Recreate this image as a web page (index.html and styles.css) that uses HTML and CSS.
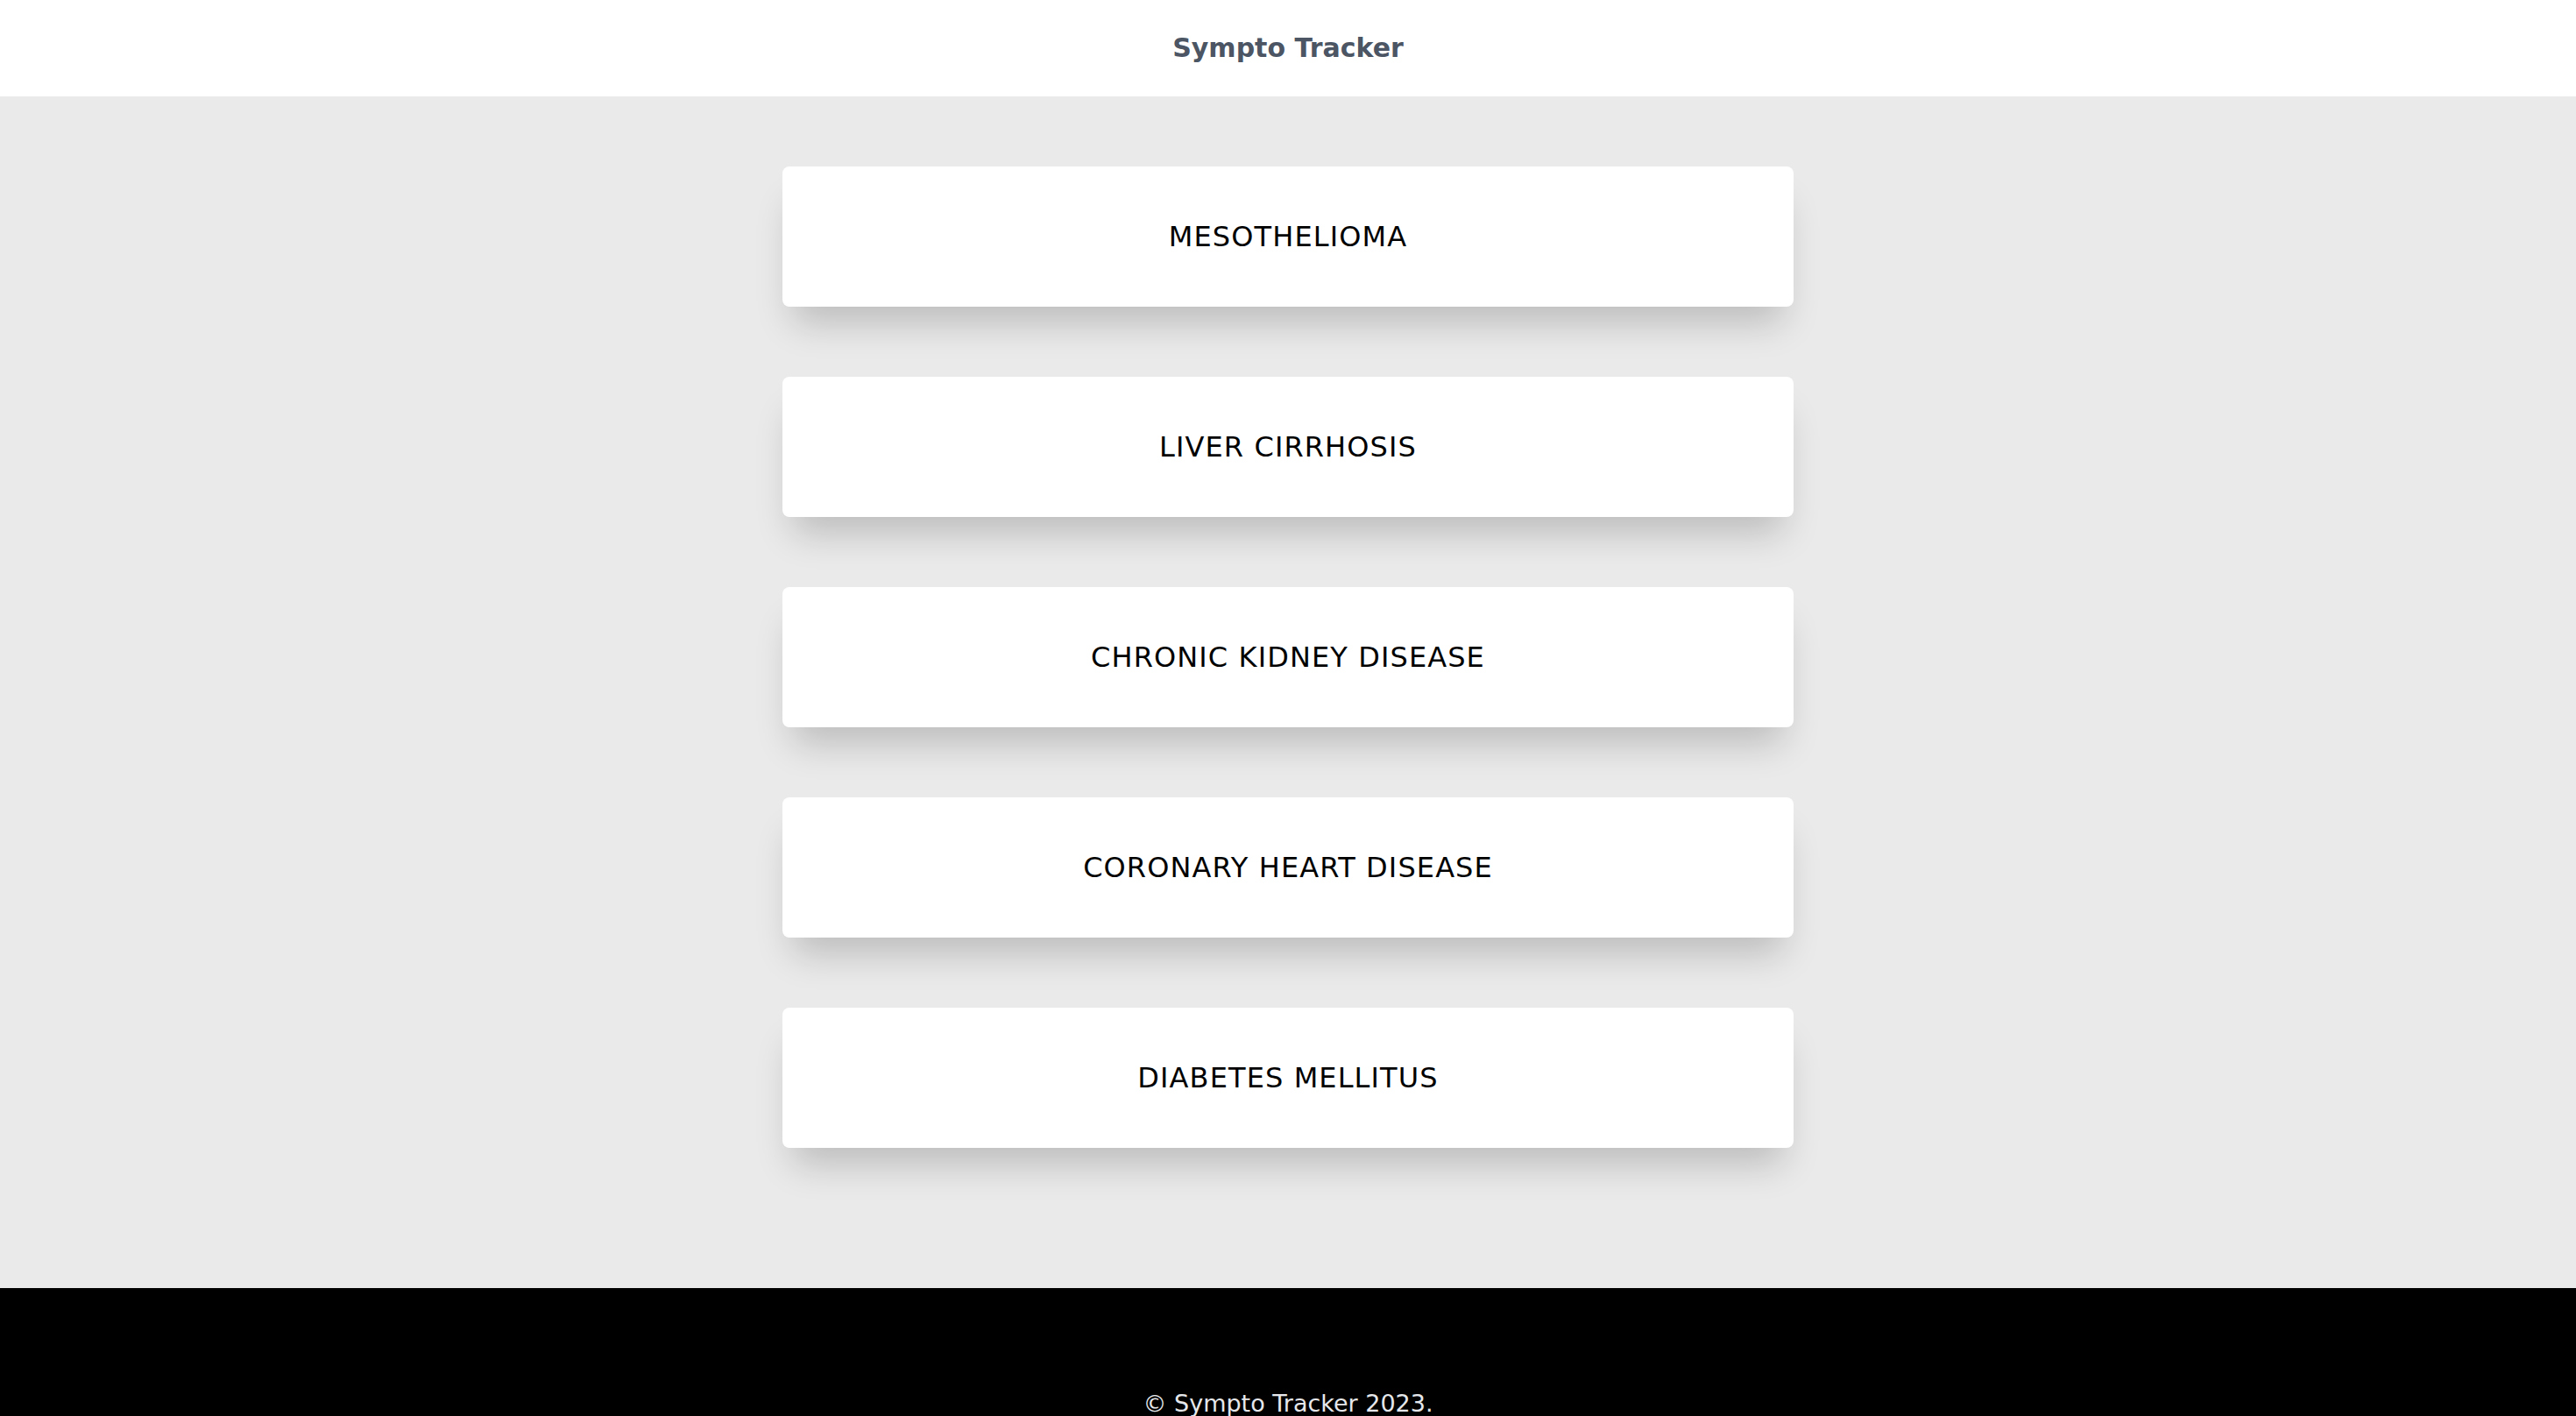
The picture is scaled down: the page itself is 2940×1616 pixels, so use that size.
FILE: index.html
```html
<!DOCTYPE html>
<html lang="en">
<head>
<meta charset="utf-8">
<title>Sympto Tracker</title>
<link rel="stylesheet" href="styles.css">
</head>
<body>
<header class="topbar">
  <h1 class="brand">Sympto Tracker</h1>
</header>
<main class="content">
  <ul class="disease-list">
    <li class="disease-card">MESOTHELIOMA</li>
    <li class="disease-card">LIVER CIRRHOSIS</li>
    <li class="disease-card">CHRONIC KIDNEY DISEASE</li>
    <li class="disease-card">CORONARY HEART DISEASE</li>
    <li class="disease-card">DIABETES MELLITUS</li>
  </ul>
</main>
<footer class="footer">
  <p class="copy">© Sympto Tracker 2023.</p>
</footer>
</body>
</html>
```
FILE: styles.css
```css
* { box-sizing: border-box; }
html, body { margin: 0; padding: 0; }
body {
  font-family: "DejaVu Sans", "Noto Sans", sans-serif;
  background: #eaeaea;
  color: #000;
}
.topbar {
  height: 110px;
  background: #fff;
  display: flex;
  align-items: center;
  justify-content: center;
}
.brand {
  margin: 0 0 2px;
  font-size: 30px;
  font-weight: 700;
  color: #4b5563;
}
.content {
  padding: 80px 0 160px;
}
.disease-list {
  list-style: none;
  margin: 0 auto;
  padding: 0;
  width: 1154px;
  display: flex;
  flex-direction: column;
  gap: 80px;
}
.disease-card {
  height: 160px;
  background: #fff;
  border-radius: 8px;
  display: flex;
  align-items: center;
  justify-content: center;
  font-size: 32px;
  letter-spacing: 1.1px;
  box-shadow: 0 30px 40px -12px rgba(0,0,0,0.2);
}
.footer {
  background: #000;
  padding: 116px 0 20px;
  display: flex;
  justify-content: center;
}
.copy {
  margin: 0;
  color: #e5e7eb;
  font-size: 27px;
}
```
